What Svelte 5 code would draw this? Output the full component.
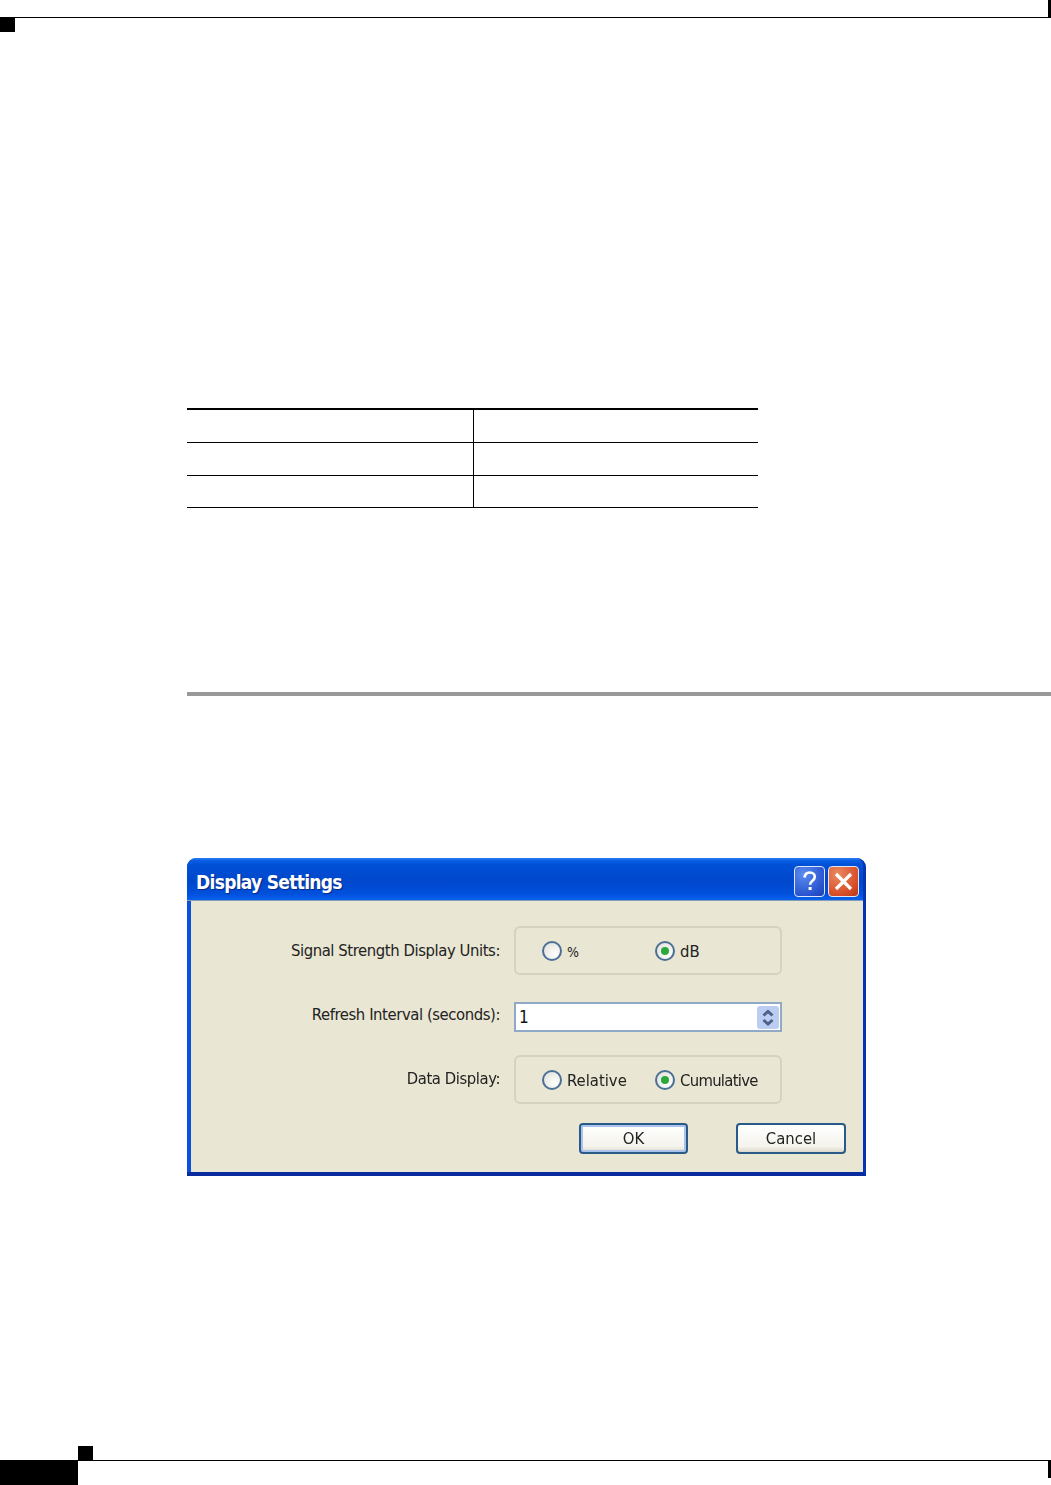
<script>
  const rows = [0, 1, 2];
</script>

<div class="page">
  <header class="top">
    <span class="top-bar"></span>
    <span class="top-mark"></span>
    <span class="top-line"></span>
  </header>

  <div class="table">
    {#each rows as r}
      <div class="cell"></div>
      <div class="cell right"></div>
    {/each}
  </div>

  <div class="rule"></div>

  <section class="dialog">
    <div class="titlebar">
      <span class="title">Display Settings</span>
      <button class="cap help" aria-label="Help">
        <svg viewBox="0 0 31 31" width="31" height="31">
          <path d="M10.5 11.5c.4-3.4 2.6-5 5.3-5 3 0 5 1.8 5 4.3 0 2-1 3-2.6 4.2-1.5 1.1-2.1 1.9-2.1 3.7" fill="none" stroke="#fff" stroke-width="2.6"/>
          <rect x="14.6" y="21" width="3" height="3" fill="#fff"/>
        </svg>
      </button>
      <button class="cap close" aria-label="Close">
        <svg viewBox="0 0 31 31" width="31" height="31">
          <path d="M8 8l15 15M23 8L8 23" fill="none" stroke="#fff" stroke-width="3.2"/>
        </svg>
      </button>
    </div>

    <div class="body">
      <div class="row r1">
        <div class="label">Signal Strength Display Units:</div>
        <div class="group">
          <span class="opt first"><i class="radio"></i><span class="txt pct">%</span></span>
          <span class="opt"><i class="radio on"></i><span class="txt">dB</span></span>
        </div>
      </div>

      <div class="row r2">
        <div class="label">Refresh Interval (seconds):</div>
        <div class="input">
          <span class="value">1</span>
          <span class="spin">
            <svg viewBox="0 0 22 23" width="22" height="23">
              <path d="M6.5 9.5l4.5-4 4.5 4M6.5 14l4.5 4 4.5-4" fill="none" stroke="#4d6185" stroke-width="3"/>
            </svg>
          </span>
        </div>
      </div>

      <div class="row r3">
        <div class="label">Data Display:</div>
        <div class="group">
          <span class="opt first"><i class="radio"></i><span class="txt">Relative</span></span>
          <span class="opt"><i class="radio on"></i><span class="txt cum">Cumulative</span></span>
        </div>
      </div>

      <div class="actions">
        <button class="btn ok">OK</button>
        <button class="btn">Cancel</button>
      </div>
    </div>
  </section>

  <footer class="bottom">
    <span class="bottom-mark"></span>
    <span class="bottom-block"></span>
    <span class="bottom-line"></span>
    <span class="bottom-bar"></span>
  </footer>
</div>

<style>
  :global(body) { margin: 0; background: #fff; }

  .page {
    width: 1051px;
    height: 1485px;
    display: flex;
    flex-direction: column;
    overflow: hidden;
    background: #fff;
    font-family: "DejaVu Sans", "Liberation Sans", Arial, sans-serif;
    font-stretch: condensed;
  }

  .top {
    display: grid;
    grid-template-columns: 15px 1fr 3px;
    grid-template-rows: 17px 15px;
  }
  .top-bar { grid-column: 3; grid-row: 1; background: #000; height: 18px; }
  .top-mark { grid-column: 1; grid-row: 2; background: #000; }
  .top-line { grid-column: 2; grid-row: 2; height: 1px; background: #000; }

  .table {
    margin: 376px 0 0 187px;
    width: 571px;
    display: grid;
    grid-template-columns: 286px 285px;
    grid-template-rows: 33px 33px 32px;
    border-top: 2px solid #000;
  }
  .cell { border-bottom: 1px solid #000; position: relative; }
  .cell.right { border-left: 1px solid #000; }
  .cell.right:last-child::after {
    content: "";
    position: absolute;
    left: -1px;
    bottom: -1px;
    width: 1px;
    height: 1px;
    background: #000;
  }

  .rule {
    margin: 184px 0 0 187px;
    height: 4px;
    background: #999;
  }

  .dialog {
    margin: 162px 0 0 187px;
    width: 679px;
    height: 318px;
    box-sizing: border-box;
    border-radius: 9px 9px 0 0;
    overflow: hidden;
    display: flex;
    flex-direction: column;
    background: #0a50dc;
    border-bottom: 4px solid #0a2b9e;
    border-right: 3px solid #0a33b4;
    filter: blur(0.4px);
  }

  .titlebar {
    height: 43px;
    flex: none;
    box-sizing: border-box;
    display: flex;
    align-items: center;
    padding: 6px 4px 2px 9px;
    gap: 3px;
    border-bottom: 1px solid #7f9db9;
    background: linear-gradient(#2b80f2 0, #0a5ee4 6%, #0051d6 16%, #0047cc 55%, #0050dc 85%, #0a62ec 100%);
  }
  .title {
    flex: 1;
    color: #fff;
    font-size: 19px;
    font-weight: 700;
    letter-spacing: -0.7px;
    text-shadow: 1px 1px 1px #0a2a80;
    transform: translateY(1px);
  }
  .cap {
    width: 31px;
    height: 31px;
    padding: 0;
    border: 1px solid #dfe8f8;
    border-radius: 4px;
    display: block;
  }
  .cap svg { display: block; margin: -1px; }
  .help { background: radial-gradient(circle at 30% 25%, #5a8cf0, #2a55d0 70%, #1c3fae); }
  .close { background: radial-gradient(circle at 30% 25%, #ea8a60, #d9512b 65%, #b8351a); }

  .body {
    flex: 1;
    margin-left: 4px;
    background: #e9e6d3;
    padding-top: 25px;
    display: flex;
    flex-direction: column;
    color: #222;
    font-size: 16.5px;
  }

  .row {
    display: grid;
    grid-template-columns: 309px 268px;
    column-gap: 14px;
    align-items: center;
  }
  .r2 { margin-top: 27px; }
  .r3 { margin-top: 23px; }

  .label { text-align: right; letter-spacing: -0.42px; }
  .r2 .label { padding-bottom: 6px; }
  .r3 .label { padding-bottom: 2px; }

  .group {
    height: 49px;
    box-sizing: border-box;
    border: 2px solid #d5d2bf;
    border-radius: 6px;
    display: flex;
    align-items: center;
    padding: 1px 0 0 26px;
  }
  .opt {
    display: inline-flex;
    align-items: center;
    gap: 5px;
  }
  .opt.first { width: 113px; }
  .txt { padding-top: 1px; }
  .cum { letter-spacing: -0.7px; }
  .pct { font-size: 14px; }

  .radio {
    width: 20px;
    height: 20px;
    box-sizing: border-box;
    border: 2px solid #4a7096;
    border-radius: 50%;
    background: radial-gradient(circle at 70% 70%, #fff, #e4e3dc 85%);
    display: block;
    position: relative;
    flex: none;
  }
  .radio.on::after {
    content: "";
    position: absolute;
    left: 4px;
    top: 4px;
    width: 8px;
    height: 8px;
    border-radius: 50%;
    background: #2aa83a;
  }

  .input {
    box-sizing: border-box;
    height: 30px;
    border: 2px solid #8fa9c6;
    background: #fff;
    display: flex;
    align-items: center;
    justify-content: space-between;
    padding: 0 1px 0 3px;
  }
  .value { font-size: 17px; color: #111; }
  .spin {
    width: 22px;
    height: 23px;
    border-radius: 3px;
    background: #bccdf4;
    display: block;
  }
  .spin svg { display: block; }

  .actions {
    width: 655px;
    display: flex;
    justify-content: flex-end;
    gap: 48px;
    margin-top: 19px;
    height: 31px;
  }
  .btn {
    width: 110px;
    height: 31px;
    padding: 0;
    border: 2px solid #2a5a88;
    border-radius: 4px;
    background: linear-gradient(#fff, #f4f3ec 80%, #dcd8cb);
    color: #222;
    font: inherit;
  }
  .btn.ok {
    width: 109px;
    box-shadow: inset 0 0 0 2px #a9c3ec;
  }

  .bottom {
    margin-top: auto;
    display: grid;
    grid-template-columns: 78px 15px 1fr 3px;
    grid-template-rows: 14px 18px 7px;
    height: 39px;
  }
  .bottom-mark { grid-column: 2; grid-row: 1; background: #000; }
  .bottom-block { grid-column: 1; grid-row: 2 / 4; background: #000; }
  .bottom-line { grid-column: 2 / 5; grid-row: 2; height: 1px; background: #000; }
  .bottom-bar { grid-column: 4; grid-row: 2; background: #000; }
</style>
